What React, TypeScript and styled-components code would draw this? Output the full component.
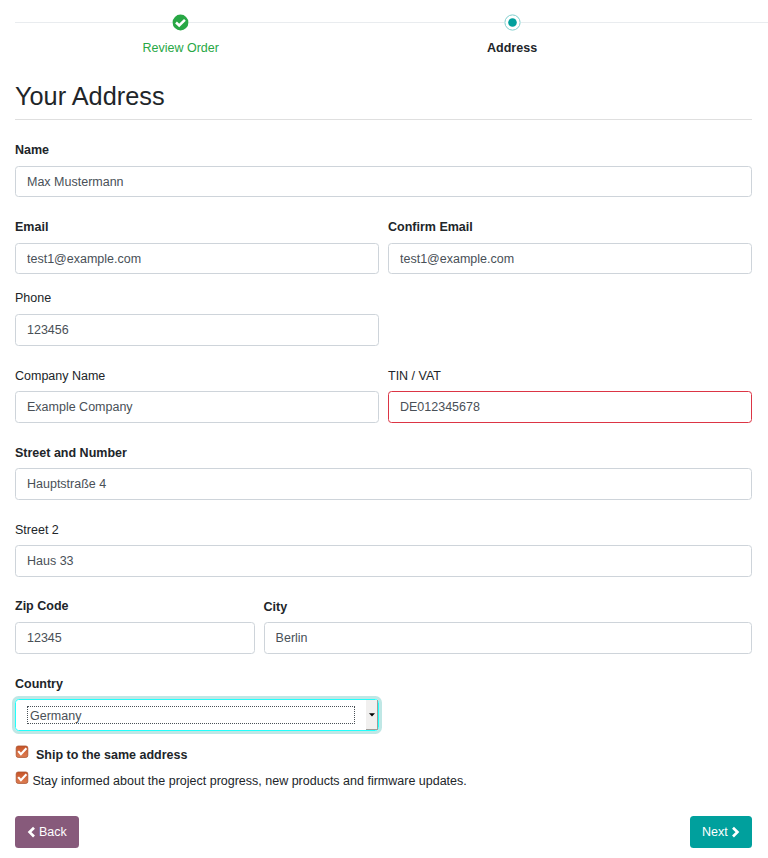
import React from "react";
import styled, { createGlobalStyle } from "styled-components";

const GlobalStyle = createGlobalStyle`
  *, *::before, *::after { box-sizing: border-box; }
  body {
    margin: 0;
    background: #fff;
    color: #212529;
    font-family: "Liberation Sans", Arial, sans-serif;
    font-size: 12.5px;
    line-height: 20px;
    overflow: hidden;
  }
`;

const Page = styled.main`
  height: 858px;
  overflow: hidden;
`;

const Steps = styled.ol`
  display: flex;
  height: 77px;
  margin: 0;
  padding: 14px 0 0 15px;
  list-style: none;
  overflow: hidden;
`;

const Step = styled.li<{ $state: "done" | "active" | "next" }>`
  flex: 0 0 331.4px;
  display: flex;
  flex-direction: column;
  align-items: center;
  color: ${(p) => (p.$state === "done" ? "#28a745" : "#212529")};
  font-weight: ${(p) => (p.$state === "active" ? 700 : 400)};
`;

const Track = styled.div`
  width: 100%;
  height: 17px;
  display: flex;
  align-items: center;
  &::before, &::after {
    content: "";
    flex: 1;
    height: 1px;
    background: #e9ecef;
  }
  svg { flex: none; display: block; }
`;

const StepLabel = styled.span`
  margin-top: 7px;
`;

const Content = styled.div`
  padding: 0 16px 0 15px;
`;

const Title = styled.h1`
  height: 43px;
  margin: 0 0 20px;
  padding-top: 3px;
  border-bottom: 1px solid #dfdfdf;
  font-size: 25.3px;
  font-weight: 400;
  line-height: 32px;
`;

const Row = styled.div<{ $height: number; $columns?: string }>`
  display: grid;
  grid-template-columns: ${(p) => p.$columns ?? "1fr"};
  column-gap: 9px;
  height: ${(p) => p.$height}px;
`;

const FieldBox = styled.div`
  display: flex;
  flex-direction: column;
  min-width: 0;
`;

const Label = styled.label<{ $bold?: boolean; $gap: number; $drop?: number }>`
  height: 20px;
  margin-bottom: ${(p) => p.$gap}px;
  padding-top: ${(p) => p.$drop ?? 0}px;
  font-weight: ${(p) => (p.$bold ? 700 : 400)};
`;

const Input = styled.input<{ $invalid?: boolean; $height: number }>`
  width: 100%;
  height: ${(p) => p.$height}px;
  padding: 0 11px;
  border: 1px solid ${(p) => (p.$invalid ? "#dc3545" : "#ced4da")};
  border-radius: 3.5px;
  background: #fff;
  color: #495057;
  font: inherit;
  outline: none;
`;

const SelectBox = styled.div`
  display: flex;
  align-items: center;
  height: 32px;
  padding-left: 11px;
  border: 1px solid #21fffc;
  border-radius: 3.5px;
  box-shadow: 0 0 0 3px #bfe7e5;
  color: #495057;
`;

const SelectValue = styled.span`
  flex: 1;
  height: 18px;
  margin-right: 11px;
  padding-left: 2px;
  border: 1px dotted #495057;
  line-height: 18px;
`;

const SelectArrow = styled.span`
  display: flex;
  align-items: center;
  justify-content: center;
  width: 12px;
  height: 30px;
  border-right: 1px solid #a09d99;
  border-bottom: 1px solid #a09d99;
  background: #f1f0ef;
`;

const CheckRow = styled.label<{ $bold?: boolean }>`
  display: flex;
  height: 26px;
  gap: ${(p) => (p.$bold ? 7 : 3.5)}px;
  font-weight: ${(p) => (p.$bold ? 700 : 400)};
  svg { flex: none; }
`;

const Actions = styled.div`
  display: flex;
  justify-content: space-between;
  margin-top: 19px;
`;

const Button = styled.button<{ $tone: "back" | "next" }>`
  display: flex;
  align-items: center;
  gap: 3px;
  width: ${(p) => (p.$tone === "back" ? 64 : 62)}px;
  height: 32px;
  padding: 0 0 0 12px;
  border: 0;
  border-radius: 3.5px;
  background: ${(p) => (p.$tone === "back" ? "#875a7b" : "#00a09d")};
  color: #fff;
  font: inherit;
`;

function DoneIcon() {
  return (
    <svg width="17" height="17" viewBox="0 0 17 17">
      <circle cx="8.5" cy="8.5" r="8.5" fill="#fff" />
      <circle cx="8.5" cy="8.5" r="7.9" fill="#28a745" />
      <path d="M4 8.5 7.2 11.5 12.9 5.9" fill="none" stroke="#fff" strokeWidth="2.5" />
    </svg>
  );
}

function ActiveIcon() {
  return (
    <svg width="17" height="17" viewBox="0 0 17 17">
      <circle cx="8.5" cy="8.5" r="7.6" fill="#fff" stroke="#80cfce" />
      <circle cx="8.5" cy="8.5" r="4.3" fill="#00a09d" />
    </svg>
  );
}

function CheckIcon() {
  return (
    <svg width="14" height="14" viewBox="0 0 14 14">
      <defs>
        <linearGradient id="checkFill" x1="0" y1="0" x2="0" y2="1">
          <stop offset="0" stopColor="#c65327" />
          <stop offset="1" stopColor="#df7e52" />
        </linearGradient>
      </defs>
      <rect x="1.2" y="1" width="11.6" height="11.4" rx="2" fill="url(#checkFill)" stroke="#a9532f" strokeOpacity="0.8" />
      <path d="M3.2 6.1 5.9 9.2 11.4 3.2" fill="none" stroke="#fff" strokeWidth="2.1" />
    </svg>
  );
}

function Chevron({ direction }: { direction: "left" | "right" }) {
  return (
    <svg width="9" height="13" viewBox="0 0 9 13">
      <path
        d={direction === "left" ? "M7 1.7 2.6 6.1 7 10.5" : "M2 1.7 6.4 6.1 2 10.5"}
        fill="none"
        stroke="#fff"
        strokeWidth="2.7"
      />
    </svg>
  );
}

type FieldProps = {
  id: string;
  label: string;
  value: string;
  bold?: boolean;
  invalid?: boolean;
  gap?: number;
  height?: number;
  drop?: number;
};

function Field({ id, label, value, bold, invalid, gap = 6, height = 32, drop }: FieldProps) {
  return (
    <FieldBox>
      <Label htmlFor={id} $bold={bold} $gap={gap} $drop={drop}>{label}</Label>
      <Input id={id} defaultValue={value} $invalid={invalid} $height={height} />
    </FieldBox>
  );
}

export default function App() {
  return (
    <Page>
      <GlobalStyle />
      <Steps>
        <Step $state="done">
          <Track><DoneIcon /></Track>
          <StepLabel>Review Order</StepLabel>
        </Step>
        <Step $state="active">
          <Track><ActiveIcon /></Track>
          <StepLabel>Address</StepLabel>
        </Step>
        <Step $state="next"><Track /></Step>
      </Steps>
      <Content>
        <Title>Your Address</Title>
        <Row $height={77}>
          <Field id="name" label="Name" value="Max Mustermann" bold height={31} />
        </Row>
        <Row $height={71} $columns="1fr 1fr">
          <Field id="email" label="Email" value="test1@example.com" bold height={31} />
          <Field id="confirm" label="Confirm Email" value="test1@example.com" bold height={31} />
        </Row>
        <Row $height={78} $columns="1fr 1fr">
          <Field id="phone" label="Phone" value="123456" />
        </Row>
        <Row $height={77} $columns="1fr 1fr">
          <Field id="company" label="Company Name" value="Example Company" gap={5} />
          <Field id="vat" label="TIN / VAT" value="DE012345678" invalid gap={5} />
        </Row>
        <Row $height={77}>
          <Field id="street" label="Street and Number" value="Hauptstraße 4" bold gap={5} />
        </Row>
        <Row $height={76}>
          <Field id="street2" label="Street 2" value="Haus 33" gap={5} />
        </Row>
        <Row $height={78} $columns="239.6px 1fr">
          <Field id="zip" label="Zip Code" value="12345" bold />
          <Field id="city" label="City" value="Berlin" bold drop={1} />
        </Row>
        <Row $height={71} $columns="1fr 1fr">
          <FieldBox>
            <Label $bold $gap={5}>Country</Label>
            <SelectBox>
              <SelectValue>Germany</SelectValue>
              <SelectArrow>
                <svg width="6" height="4" viewBox="0 0 6 4"><path d="M0 0.3H6L3 3.6Z" fill="#000" /></svg>
              </SelectArrow>
            </SelectBox>
          </FieldBox>
        </Row>
        <CheckRow $bold><CheckIcon />Ship to the same address</CheckRow>
        <CheckRow><CheckIcon />Stay informed about the project progress, new products and firmware updates.</CheckRow>
        <Actions>
          <Button $tone="back"><Chevron direction="left" />Back</Button>
          <Button $tone="next">Next<Chevron direction="right" /></Button>
        </Actions>
      </Content>
    </Page>
  );
}
